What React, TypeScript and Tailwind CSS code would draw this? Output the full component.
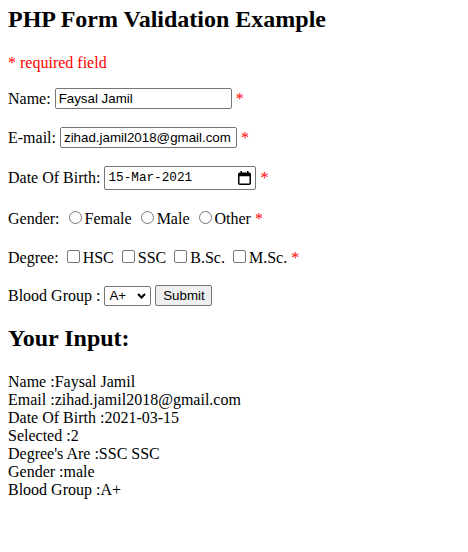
import React from "react";

const Star = () => <span className="text-[#ff0000]">{"\u00a0*"}</span>;

const boxInput =
  "h-[21px] w-[177px] border border-[#767676] rounded-[2px] pl-[3px] pr-[2px] font-['Liberation_Sans',Arial,sans-serif] text-[13.33px] text-black bg-white outline-none";

const Radio = ({ label }: { label: string }) => (
  <>
    <input
      type="radio"
      name="gender"
      className="inline-block appearance-none w-[13px] h-[13px] rounded-full border border-[#767676] bg-white ml-[5px] mr-[3px] align-baseline"
    />
    {label}
  </>
);

const Check = ({ label }: { label: string }) => (
  <>
    <input
      type="checkbox"
      className="inline-block appearance-none w-[13px] h-[13px] rounded-[2px] border border-[#767676] bg-white ml-[4px] mr-[3px] align-baseline"
    />
    {label}
  </>
);

const results = [
  "Name :Faysal Jamil",
  "Email :zihad.jamil2018@gmail.com",
  "Date Of Birth :2021-03-15",
  "Selected :2",
  "Degree's Are :SSC SSC",
  "Gender :male",
  "Blood Group :A+",
];

export default function App() {
  return (
    <div className="min-h-screen bg-white px-[8px] font-['Liberation_Serif','Times_New_Roman',serif] text-[16px] leading-[18px] text-black">
      <h2 className="pt-[6px] text-[24px] leading-[27px] font-bold">
        PHP Form Validation Example
      </h2>
      <p className="mt-[21px] text-[#ff0000]">* required field</p>

      <form onSubmit={(e) => e.preventDefault()}>
        <div className="mt-[16px] flex h-[21px] items-center">
          <span>{"Name:\u00a0"}</span>
          <input className={boxInput} defaultValue="Faysal Jamil" />
          <Star />
        </div>

        <div className="mt-[18px] flex h-[21px] items-center">
          <span>{"E-mail:\u00a0"}</span>
          <input className={boxInput} defaultValue="zihad.jamil2018@gmail.com" />
          <Star />
        </div>

        <div className="mt-[18px] flex h-[24px] items-center">
          <span>{"Date Of Birth:\u00a0"}</span>
          <div className="flex h-[24px] w-[152px] items-center justify-between border border-[#767676] rounded-[2px] bg-white pl-[3px] pr-[4px]">
            <span className="font-['Liberation_Mono','Courier_New',monospace] text-[12.7px] leading-[16px] text-black">
              15-Mar-2021
            </span>
            <svg width="13" height="14" viewBox="0 0 13 14" fill="none">
              <rect x="0.75" y="2.25" width="11.5" height="11" rx="1" stroke="#000" strokeWidth="1.5" />
              <rect x="0.75" y="2.25" width="11.5" height="3" fill="#000" />
              <rect x="2.5" y="0" width="1.5" height="3" fill="#000" />
              <rect x="9" y="0" width="1.5" height="3" fill="#000" />
            </svg>
          </div>
          <Star />
        </div>

        <div className="mt-[20px] h-[18px] whitespace-nowrap">
          {"Gender: "}
          <Radio label="Female" /> <Radio label="Male" /> <Radio label="Other" />
          <span className="text-[#ff0000]"> *</span>
        </div>

        <div className="mt-[21px] h-[18px] whitespace-nowrap">
          {"Degree: "}
          <Check label="HSC" /> <Check label="SSC" /> <Check label="B.Sc." />{" "}
          <Check label="M.Sc." />
          <span className="text-[#ff0000]"> *</span>
        </div>

        <div className="mt-[18px] flex h-[21px] items-center">
          <span>{"Blood Group :\u00a0"}</span>
          <div className="relative h-[20px] w-[47px]">
            <select className="h-[20px] w-[47px] appearance-none border border-[#767676] rounded-[2px] bg-white pl-[4px] font-['Liberation_Sans',Arial,sans-serif] text-[13.33px] text-black outline-none">
              <option>A+</option>
              <option>A-</option>
              <option>B+</option>
              <option>B-</option>
              <option>O+</option>
              <option>O-</option>
              <option>AB+</option>
              <option>AB-</option>
            </select>
            <svg
              className="pointer-events-none absolute right-[5px] top-[7px]"
              width="9"
              height="6"
              viewBox="0 0 9 6"
              fill="none"
            >
              <path d="M1 1l3.5 3.5L8 1" stroke="#000" strokeWidth="2" />
            </svg>
          </div>
          <span>{"\u00a0"}</span>
          <button
            type="submit"
            className="h-[21px] w-[57px] border border-[#767676] rounded-[2px] bg-[#efefef] font-['Liberation_Sans',Arial,sans-serif] text-[13.33px] text-black"
          >
            Submit
          </button>
        </div>
      </form>

      <h2 className="mt-[19px] text-[24px] leading-[27px] font-bold">Your Input:</h2>
      <div className="mt-[21px] flex flex-col">
        {results.map((r) => (
          <div key={r} className="h-[18px] whitespace-nowrap">
            {r}
          </div>
        ))}
      </div>
    </div>
  );
}
